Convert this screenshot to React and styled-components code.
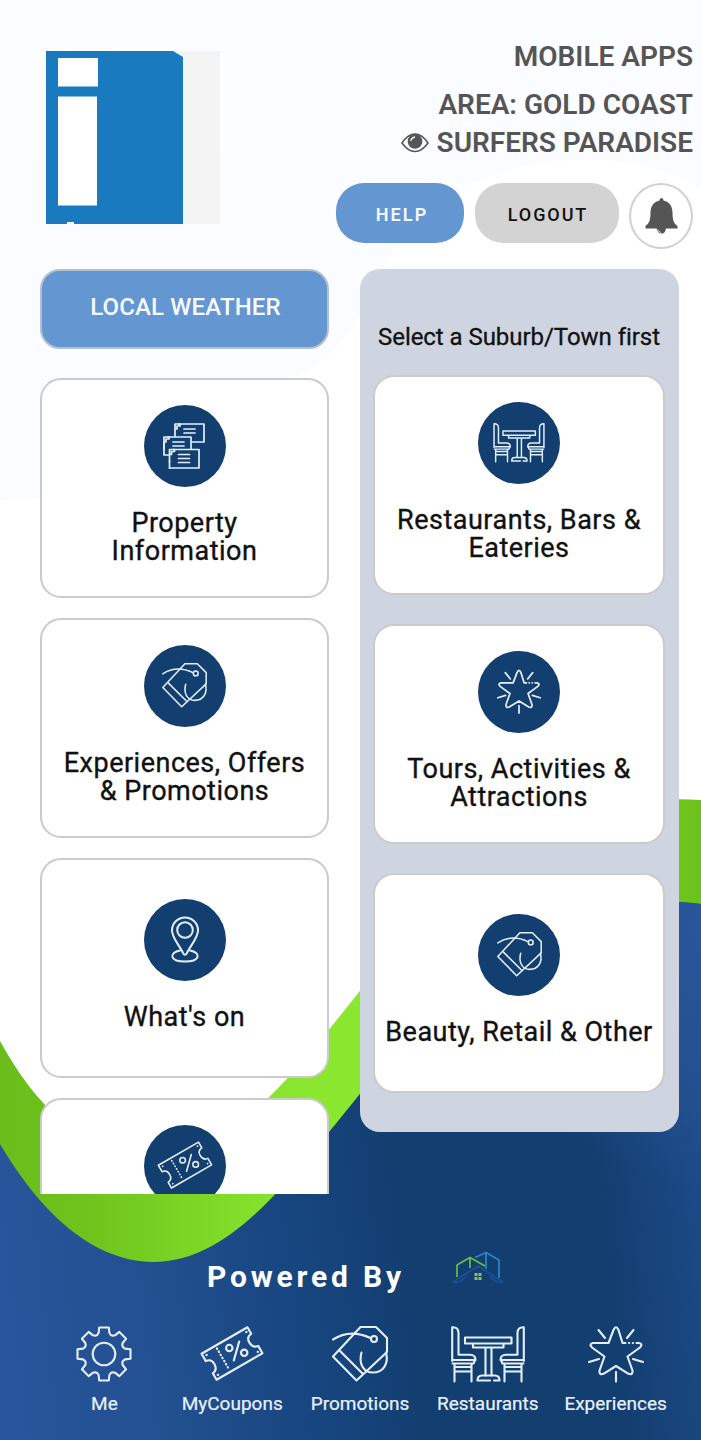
import React from "react";
import styled, { createGlobalStyle } from "styled-components";

const GEAR = Array.from({ length: 8 }, (_, i) => {
  const a = (i * Math.PI) / 4;
  return [
    [-6.8, -19],
    [-5.4, -21],
    [-4.8, -26.5],
    [4.8, -26.5],
    [5.4, -21],
    [6.8, -19],
  ]
    .map(
      ([x, y]) =>
        `${(28 + x * Math.cos(a) - y * Math.sin(a)).toFixed(2)},${(
          28 +
          x * Math.sin(a) +
          y * Math.cos(a)
        ).toFixed(2)}`
    )
    .join(" ");
}).join(" ");

const GearIcon = () => (
  <Icon viewBox="0 0 56 56" $w={56} $h={56}>
    <polygon points={GEAR} />
    <circle cx="28" cy="28" r="11.3" />
  </Icon>
);

const TicketIcon = ({ w = 64, h = 56, line }) => (
  <Icon viewBox="0 0 64 56" $w={w} $h={h} $line={line}>
    <g transform="translate(32 27.5) rotate(-30)">
      <path d="M-26.5 -15H26.5V-7.5Q20.5 -7 20.5 -1Q20.5 6 26.5 6.5V15H-26.5V7.5Q-20.5 7 -20.5 0Q-20.5 -6 -26.5 -6.5Z" />
      <path d="M-10.5 -12V13" strokeDasharray="0.6 3" />
      <path d="M-23 -11.5h.4M23 -11.5h.4M-23 11.5h.4M23 11.5h.4" />
    </g>
    <path d="M39.2 15.5L33.8 34.5" />
    <circle cx="29.3" cy="22" r="3.2" />
    <circle cx="44.2" cy="26.8" r="3.2" />
  </Icon>
);

const TagIcon = ({ w = 56, h = 56, line }) => (
  <Icon viewBox="0 0 56 56" $w={w} $h={h} $line={line}>
    <path d="M28.5 1H44L55 12V26L24.5 54.5L1 30.5Z" />
    <path d="M8 25L31 48" />
    <path d="M1 13.5Q18 2.500 38.5 12" />
    <circle cx="42" cy="13" r="3" />
    <path d="M29.5 26.5C26.5 37 31 46.5 41 46.5C51 46.5 57 38 54 26.5" />
  </Icon>
);

const TableIcon = ({ w = 74, h = 56, line }) => (
  <Icon viewBox="0 0 74 56" $w={w} $h={h} $line={line}>
    {[undefined, "translate(74 0) scale(-1 1)"].map((flip, i) => (
      <g key={i} transform={flip}>
        <path d="M1.200 35V1.200Q7.500 1 7.500 7V28.800H19Q24.500 29 24.500 34H1.200" />
        <path d="M1.500 37.500H22.500L24 34M3.500 38V55.500M20.500 38V55.500M3.500 45.500H20.500M3.500 41H20.500" />
      </g>
    ))}
    <path d="M14 11.500H60.500V17.500H14ZM22 17.500V21.500H52.500V17.500M34.500 22V49.500M40.500 22V49.500" />
    <path d="M39 54.500H26.500Q26.500 49.500 31 49.500H44Q48.500 49.500 48.500 54.500H43" />
  </Icon>
);

const StarIcon = ({ w = 56, h = 56, line }) => (
  <Icon viewBox="0 0 56 56" $w={w} $h={h} $line={line}>
    <path d="M37.500 17H34.500L30.500 4Q28 -1.500 25.500 4L20.500 17H5Q0.500 18 4 21.500L16.500 30.500L11.500 44.500Q11 49.500 15.500 47.800L28 40L40.500 47.800Q45 49.500 44.500 44.500L39.500 30.500L52 21.500Q55.500 17.500 50.500 17H48.500" />
    <path d="M41 17h.2M44.800 17h.2" />
    <path d="M10.500 4L17 12M45.500 4L39 12M1 36L11 33M55 36L45 33M28 46V55.500" />
  </Icon>
);

const PinIcon = () => (
  <Icon viewBox="0 0 28 47" $w={28} $h={47} $line={2}>
    <path d="M12 37C9 30 1 22 1 14.500A13 13 0 0 1 27 14.500C27 22 19 30 16 37Q14 40.500 12 37Z" />
    <circle cx="14" cy="14" r="7.800" />
    <path d="M9 34.500C-2 36.500 -2 45.500 14 45.500C30 45.500 30 36.500 19 34.500" />
  </Icon>
);

const NotesIcon = () => (
  <Icon viewBox="0 0 43 46" $w={43} $h={46} $line={1.7}>
    {[
      [12, 1, "H41V19H29"],
      [1, 14, "H28V26M1 20V32H6"],
      [6.5, 26.5, "H36V45H6.500"],
    ].map(([x, y, rest], i) => (
      <g key={i}>
        <path d={`M${x + 4} ${y}${rest}`} />
        <path d={`M${x} ${y + 12}V${y}H${x + 5}V${y + 2}H${x + 2}V${y + 5}H${x}`} />
        <path d={`M${x + 9} ${y + 5}h11M${x + 9} ${y + 9}h11`} />
      </g>
    ))}
    <path d="M6.500 38V45M15.500 39.500h11" />
  </Icon>
);

const EyeIcon = () => (
  <EyeSvg viewBox="0 0 28 20">
    <path
      d="M1 10Q7 1 14 1T27 10Q21 18.500 14 18.500T1 10Z"
      fill="#fcfdff"
      stroke="#555"
      strokeWidth="1.600"
    />
    <circle cx="14" cy="8.500" r="7.300" fill="#555" />
    <path d="M9.800 8Q10.500 4.500 14 4" fill="none" stroke="#fff" strokeWidth="1.300" />
  </EyeSvg>
);

const BellIcon = () => (
  <BellSvg viewBox="0 0 33 37">
    <path
      fill="#555"
      d="M16.500 0Q18.500 0 18.500 2.500C25 4 27.500 9 27.500 15C27.500 22 29 25.500 32.500 28V30.500H.5V28C4 25.500 5.500 22 5.500 15C5.500 9 8 4 14.500 2.500Q14.500 0 16.500 0Z"
    />
    <path fill="#555" d="M11.500 30H21Q20.500 35.500 16.500 35.500T11.500 30Z" />
    <path d="M12.800 31.500Q13.200 34 16 34.500" fill="none" stroke="#fff" strokeWidth="0.800" />
  </BellSvg>
);

const InfoLogo = () => (
  <LogoSvg viewBox="0 0 174 173">
    <path fill="#f4f4f4" d="M127 0H174V173H127Z" />
    <path fill="#1a7abf" d="M0 0H127L137 6V173H28V171H21V173H0Z" />
    <path fill="#fff" d="M12 7H52V35.500H12ZM12 45.500H51V154.500H12Z" />
  </LogoSvg>
);

const HouseLogo = () => (
  <HouseSvg viewBox="0 0 52 37" fill="none" strokeLinejoin="round">
    <path stroke="#1a4f96" strokeWidth="1.800" d="M1 31Q8 33 14 25M38 25Q44 33 51 31L26 15L1 31" />
    <path stroke="#2b87c9" strokeWidth="1.700" d="M23 6.500L34 1.500L47 9V27M34 1.500V18" />
    <path stroke="#6cbd45" strokeWidth="1.700" d="M5 26V14L18 6.500L33 15M18 6.500V17" />
    <path fill="#8cc63f" d="M22.500 22h3v3h-3zM26.500 22h3v3h-3zM22.500 26h3v3h-3zM26.500 26h3v3h-3z" />
  </HouseSvg>
);

const Backdrop = () => (
  <BackdropSvg viewBox="0 0 701 1440" preserveAspectRatio="none">
    <defs>
      <linearGradient id="sky" x1="0" y1="0" x2="0.300" y2="1">
        <stop offset="0" stopColor="#fcfdff" />
        <stop offset="1" stopColor="#fafcff" />
      </linearGradient>
      <linearGradient id="sea" gradientUnits="userSpaceOnUse" x1="0" y1="1250" x2="701" y2="1170">
        <stop offset="0" stopColor="#28559b" />
        <stop offset="0.200" stopColor="#235090" />
        <stop offset="0.400" stopColor="#184680" />
        <stop offset="0.580" stopColor="#123e70" />
        <stop offset="0.850" stopColor="#123e70" />
        <stop offset="1" stopColor="#1d4a86" />
      </linearGradient>
      <radialGradient id="glow" gradientUnits="userSpaceOnUse" cx="740" cy="930" r="270">
        <stop offset="0" stopColor="#2b589e" />
        <stop offset="1" stopColor="#2b589e" stopOpacity="0" />
      </radialGradient>
      <linearGradient id="leaf" gradientUnits="userSpaceOnUse" x1="0" y1="0" x2="701" y2="0">
        <stop offset="0" stopColor="#6abd1b" />
        <stop offset="0.120" stopColor="#6ec31c" />
        <stop offset="0.420" stopColor="#8ae62f" />
        <stop offset="0.600" stopColor="#8ce730" />
        <stop offset="1" stopColor="#6cc21a" />
      </linearGradient>
    </defs>
    <path
      fill="url(#sky)"
      d="M0 0H701V190C640 145 500 150 430 210C350 275 390 340 270 390C170 430 120 500 0 500Z"
    />
    <path
      fill="url(#leaf)"
      d="M0 1041C35 1105 80 1150 150 1160C230 1155 285 1085 359 992C460 870 560 790 701 800V1300H0Z"
    />
    <path
      fill="url(#sea)"
      d="M0 1144C40 1212 92 1261 153 1262C229 1262 286 1185 359 1095C450 985 560 885 701 904V1440H0Z"
    />
    <path
      fill="url(#glow)"
      d="M359 1095C450 985 560 885 701 904V1440H359Z"
    />
  </BackdropSvg>
);

const leftCards = [
  { icon: <NotesIcon />, label: ["Property", "Information"] },
  {
    icon: <TagIcon w={45} h={45} line={1.9} />,
    label: ["Experiences, Offers", "& Promotions"],
  },
  { icon: <PinIcon />, label: ["What's on"] },
  { icon: <TicketIcon w={56} h={49} line={1.8} />, label: [] },
];

const rightCards = [
  {
    icon: <TableIcon w={52} h={39} line={2.1} />,
    label: ["Restaurants, Bars &", "Eateries"],
  },
  {
    icon: <StarIcon w={44} h={45} line={2.2} />,
    label: ["Tours, Activities &", "Attractions"],
  },
  {
    icon: <TagIcon w={45} h={45} line={1.9} />,
    label: ["Beauty, Retail & Other"],
  },
];

const navItems = [
  { icon: <GearIcon />, label: "Me" },
  { icon: <TicketIcon />, label: "MyCoupons" },
  { icon: <TagIcon />, label: "Promotions" },
  { icon: <TableIcon />, label: "Restaurants" },
  { icon: <StarIcon />, label: "Experiences" },
];

const MenuCard = ({ icon, label }) => (
  <Card>
    <IconCircle>{icon}</IconCircle>
    <CardLabel $empty={label.length === 0}>
      {label.map((line) => (
        <span key={line}>{line}</span>
      ))}
    </CardLabel>
  </Card>
);

export default function App() {
  return (
    <Page>
      <GlobalStyle />
      <Backdrop />
      <Screen>
        <Header>
          <InfoLogo />
          <Account>
            <Title>MOBILE APPS</Title>
            <Area>AREA: GOLD COAST</Area>
            <Area>
              <EyeIcon />
              SURFERS PARADISE
            </Area>
            <Actions>
              <PillButton $primary>HELP</PillButton>
              <PillButton>LOGOUT</PillButton>
              <BellButton aria-label="Notifications">
                <BellIcon />
              </BellButton>
            </Actions>
          </Account>
        </Header>
        <Columns>
          <ScrollColumn>
            <WeatherButton>LOCAL WEATHER</WeatherButton>
            <LeftList>
              {leftCards.map((card, i) => (
                <MenuCard key={i} {...card} />
              ))}
            </LeftList>
          </ScrollColumn>
          <SuburbPanel>
            <Hint>Select a Suburb/Town first</Hint>
            <RightList>
              {rightCards.map((card, i) => (
                <MenuCard key={i} {...card} />
              ))}
            </RightList>
          </SuburbPanel>
        </Columns>
        <Powered>
          <PoweredText>Powered By</PoweredText>
          <HouseLogo />
        </Powered>
        <Nav>
          {navItems.map(({ icon, label }) => (
            <NavItem key={label}>
              {icon}
              <span>{label}</span>
            </NavItem>
          ))}
        </Nav>
      </Screen>
    </Page>
  );
}

const GlobalStyle = createGlobalStyle`
  * {
    box-sizing: border-box;
  }
  body {
    margin: 0;
    font-family: Roboto, "Liberation Sans", sans-serif;
  }
`;

/* backdrop and screen share one grid cell */
const Page = styled.div`
  display: grid;
  width: 701px;
  height: 1440px;
  overflow: hidden;
  background: #fff;
`;

const BackdropSvg = styled.svg`
  grid-area: 1 / 1;
  width: 701px;
  height: 1440px;
`;

const Screen = styled.div`
  grid-area: 1 / 1;
  display: flex;
  flex-direction: column;
  min-width: 0;
`;

const Icon = styled.svg`
  display: block;
  flex: none;
  width: ${(p) => p.$w}px;
  height: ${(p) => p.$h}px;
  overflow: visible;
  fill: none;
  stroke: #e4effc;
  stroke-width: ${(p) => p.$line || 2.1};
  stroke-linecap: round;
  stroke-linejoin: round;
`;

const Header = styled.header`
  display: flex;
  justify-content: space-between;
  height: 269px;
  padding: 0 8px 0 46px;
`;

const LogoSvg = styled.svg`
  width: 174px;
  height: 173px;
  margin-top: 51px;
`;

const Account = styled.div`
  display: flex;
  flex-direction: column;
  align-items: flex-end;
  padding-top: 37.5px;
`;

const Title = styled.div`
  margin-bottom: 10px;
  color: #555;
  font-size: 28px;
  font-weight: 600;
  line-height: 38px;
`;

const Area = styled.div`
  display: flex;
  align-items: center;
  color: #555;
  font-size: 28px;
  font-weight: 600;
  line-height: 38px;
`;

const EyeSvg = styled.svg`
  width: 28px;
  height: 20px;
  margin-right: 8px;
`;

const Actions = styled.div`
  display: flex;
  align-items: flex-start;
  margin-top: 21.5px;
`;

const PillButton = styled.button`
  width: ${(p) => (p.$primary ? 128 : 144)}px;
  height: 60px;
  margin-right: ${(p) => (p.$primary ? 11 : 10)}px;
  padding: ${(p) => (p.$primary ? "3px 0 0 4px" : "3px 0 0 2px")};
  border: none;
  border-radius: 28px;
  background: ${(p) => (p.$primary ? "#6496d2" : "#d3d3d3")};
  color: ${(p) => (p.$primary ? "#f4f8ff" : "#111")};
  font-family: inherit;
  font-size: 18px;
  font-weight: ${(p) => (p.$primary ? 600 : 500)};
  letter-spacing: ${(p) => (p.$primary ? 2.1 : 1.9)}px;
`;

const BellButton = styled.button`
  display: flex;
  align-items: center;
  justify-content: center;
  width: 64px;
  height: 66px;
  padding: 0;
  border: 2px solid #d0d0d2;
  border-radius: 50%;
  background: #fff;
`;

const BellSvg = styled.svg`
  width: 33px;
  height: 37px;
`;

const Columns = styled.main`
  display: flex;
  align-items: flex-start;
  justify-content: space-between;
  height: 925px;
  padding: 0 22px 0 40px;
`;

const ScrollColumn = styled.section`
  width: 289px;
  height: 925px;
  overflow: hidden;
`;

const WeatherButton = styled.button`
  display: block;
  width: 289px;
  height: 80px;
  margin-bottom: 29px;
  padding: 0 0 5px 2px;
  border: 2px solid #b4bfd0;
  border-radius: 20px;
  background: #6496d2;
  color: #f6faff;
  font-family: inherit;
  font-size: 24px;
  font-weight: 500;
  letter-spacing: 0.15px;
`;

const LeftList = styled.div`
  display: flex;
  flex-direction: column;
  gap: 20.5px;
`;

const SuburbPanel = styled.section`
  width: 319.5px;
  height: 863px;
  padding: 48px 14px 0 13.5px;
  border-radius: 20px;
  background: #ced4e0;
`;

const Hint = styled.div`
  height: 58px;
  color: #111;
  font-size: 24px;
  line-height: 40px;
  letter-spacing: -0.05px;
  text-align: center;
  white-space: nowrap;
  -webkit-text-stroke: 0.3px;
`;

const RightList = styled.div`
  display: flex;
  flex-direction: column;
  gap: 29.5px;
`;

const Card = styled.article`
  display: flex;
  flex: none;
  flex-direction: column;
  align-items: center;
  justify-content: center;
  height: 219.5px;
  padding-bottom: 6px;
  border: 2px solid #cbcbcd;
  border-radius: 21px;
  background: #fff;
`;

const IconCircle = styled.div`
  display: flex;
  align-items: center;
  justify-content: center;
  width: 82px;
  height: 82px;
  border-radius: 50%;
  background: #123f70;
`;

const CardLabel = styled.div`
  display: flex;
  flex-direction: column;
  align-items: center;
  min-height: ${(p) => (p.$empty ? 56 : 28)}px;
  margin-top: 22px;
  color: #111;
  font-size: 27px;
  line-height: 28px;
  letter-spacing: 0.5px;
  white-space: nowrap;
  -webkit-text-stroke: 0.35px;
`;

const Powered = styled.div`
  display: flex;
  align-items: flex-start;
  height: 132px;
  padding: 57px 0 0 207px;
`;

const PoweredText = styled.div`
  width: 245px;
  padding-top: 8px;
  color: #fff;
  font-size: 30px;
  font-weight: 700;
  line-height: 36px;
  letter-spacing: 3.8px;
`;

const HouseSvg = styled.svg`
  width: 52px;
  height: 37px;
`;

const Nav = styled.nav`
  display: grid;
  grid-template-columns: repeat(5, 127.8px);
  padding-left: 40.5px;
`;

const NavItem = styled.div`
  display: flex;
  flex-direction: column;
  align-items: center;
  gap: 10px;
  color: #e8f1fc;
  font-size: 19px;
  line-height: 24px;
  -webkit-text-stroke: 0.2px;
`;
